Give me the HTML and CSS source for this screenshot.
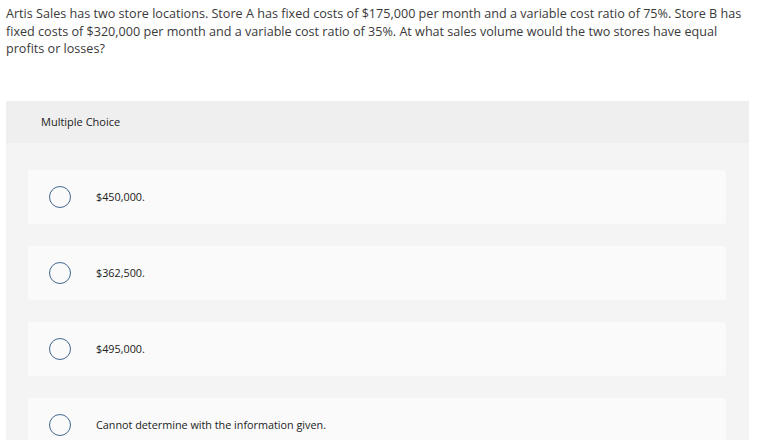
FILE: index.html
```html
<!DOCTYPE html>
<html>
<head>
<meta charset="utf-8">
<link rel="stylesheet" href="styles.css">
</head>
<body>
<p class="question">Artis Sales has two store locations. Store A has fixed costs of $175,000 per month and a variable cost ratio of 75%. Store B has fixed costs of $320,000 per month and a variable cost ratio of 35%. At what sales volume would the two stores have equal profits or losses?</p>
<div class="panel">
  <div class="panel-head">Multiple Choice</div>
  <div class="panel-body">
    <div class="option"><span class="radio"></span><span class="label">$450,000.</span></div>
    <div class="option"><span class="radio"></span><span class="label">$362,500.</span></div>
    <div class="option"><span class="radio"></span><span class="label">$495,000.</span></div>
    <div class="option"><span class="radio"></span><span class="label">Cannot determine with the information given.</span></div>
  </div>
</div>
</body>
</html>
```

FILE: styles.css
```css
html, body {
  margin: 0;
  padding: 0;
  background: #ffffff;
}
body {
  padding: 0 17px 0 6px;
  font-family: "Open Sans", "Liberation Sans", sans-serif;
}
.question {
  margin: 5px 0 0 0;
  font-size: 12.6px;
  line-height: 17.5px;
  color: #3a3a3a;
}
.panel {
  margin-top: 43px;
  background: #f4f4f4;
}
.panel-head {
  background: #efefef;
  height: 42px;
  display: flex;
  align-items: center;
  padding-left: 35px;
  font-size: 11px;
  color: #222;
}
.panel-body {
  padding: 27px 23px 0 22px;
  display: flex;
  flex-direction: column;
  gap: 22px;
}
.option {
  background: #fafafa;
  height: 54px;
  display: flex;
  align-items: center;
  border-radius: 2px;
}
.radio {
  width: 20px;
  height: 20px;
  border: 1.5px solid #41688f;
  border-radius: 50%;
  margin-left: 21px;
  flex: none;
}
.label {
  margin-left: 25px;
  font-size: 10.8px;
  color: #222;
}
```
